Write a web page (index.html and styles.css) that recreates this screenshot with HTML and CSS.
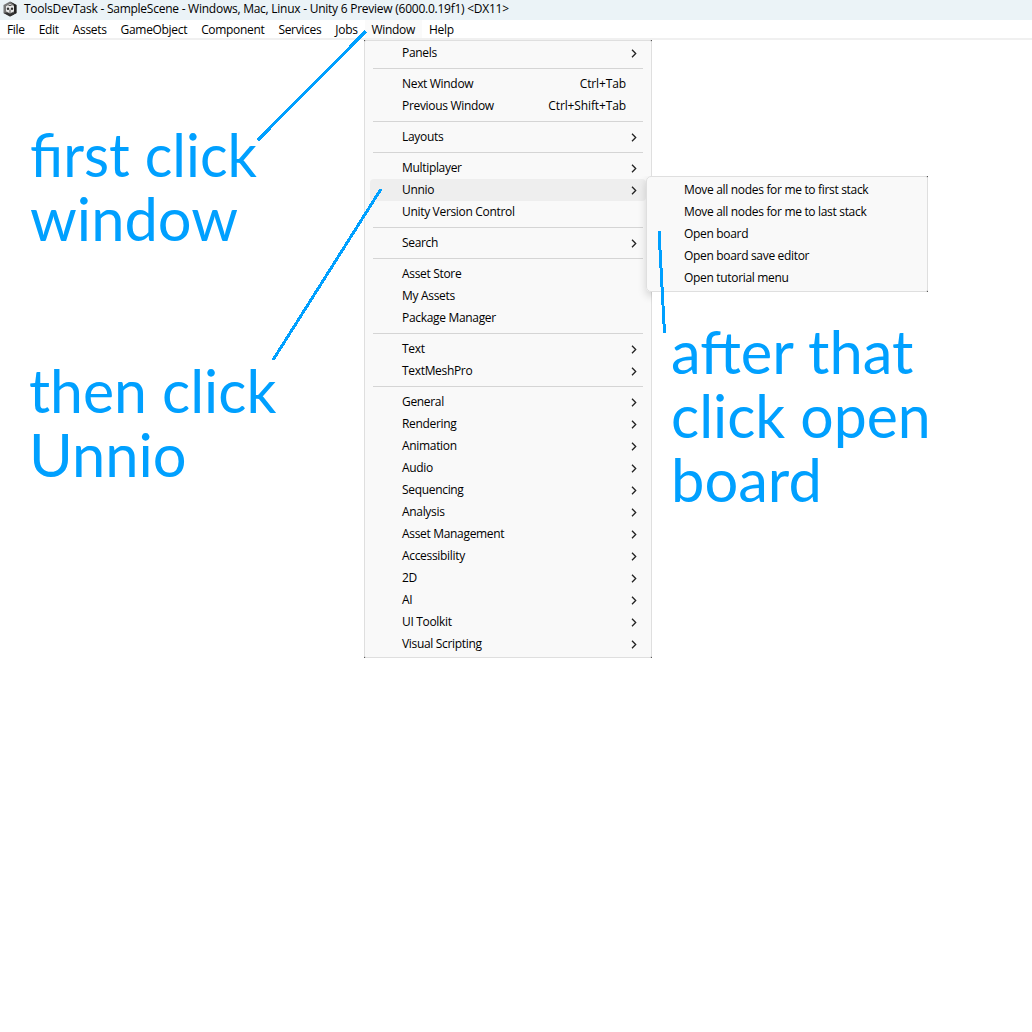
FILE: index.html
```html
<!DOCTYPE html>
<html lang="en">
<head>
<meta charset="utf-8">
<title>ToolsDevTask - SampleScene</title>
<link rel="stylesheet" href="styles.css">
</head>
<body>
<svg class="defs" width="0" height="0"><symbol id="chev" viewBox="0 0 6 9"><path d="M1 .8 4.7 4.5 1 8.2" fill="none" stroke="#222" stroke-width="1.3"/></symbol></svg>
<header class="titlebar">
<svg class="logo" width="14" height="16" viewBox="0 0 14 16"><path d="M7 .5 13.5 4v8L7 15.5 .5 12V4z" fill="#777"/><path d="M7 .5 13.5 4v8L7 15.5 11 12V4z" fill="#222"/><path d="M.5 12 7 15.500 13.500 12 7 11z" fill="#333"/><path d="M7 3 11 5.200v5L7 12.500 3 10.200v-5z" fill="#e8e8e8"/><circle cx="5" cy="7.800" r="1.200" fill="#333"/><circle cx="9" cy="7.800" r="1.200" fill="#333"/><path d="M7 8.500V12M5.500 4.500h3" stroke="#555" stroke-width="1"/></svg>
<span class="title">ToolsDevTask - SampleScene - Windows, Mac, Linux - Unity 6 Preview (6000.0.19f1) &lt;DX11&gt;</span>
</header>
<nav class="menubar">
<span>File</span><span>Edit</span><span>Assets</span><span>GameObject</span><span>Component</span><span>Services</span><span>Jobs</span><span class="open">Window</span><span>Help</span>
</nav>
<div class="menu-frame main"><div class="menu">
<div class="row"><span>Panels</span><svg><use href="#chev"/></svg></div>
<hr>
<div class="row"><span>Next Window</span><kbd>Ctrl+Tab</kbd></div>
<div class="row"><span>Previous Window</span><kbd>Ctrl+Shift+Tab</kbd></div>
<hr>
<div class="row"><span>Layouts</span><svg><use href="#chev"/></svg></div>
<hr>
<div class="row"><span>Multiplayer</span><svg><use href="#chev"/></svg></div>
<div class="row active"><span>Unnio</span><svg><use href="#chev"/></svg></div>
<div class="row"><span>Unity Version Control</span></div>
<hr>
<div class="row"><span>Search</span><svg><use href="#chev"/></svg></div>
<hr>
<div class="row"><span>Asset Store</span></div>
<div class="row"><span>My Assets</span></div>
<div class="row"><span>Package Manager</span></div>
<hr>
<div class="row"><span>Text</span><svg><use href="#chev"/></svg></div>
<div class="row"><span>TextMeshPro</span><svg><use href="#chev"/></svg></div>
<hr>
<div class="row"><span>General</span><svg><use href="#chev"/></svg></div>
<div class="row"><span>Rendering</span><svg><use href="#chev"/></svg></div>
<div class="row"><span>Animation</span><svg><use href="#chev"/></svg></div>
<div class="row"><span>Audio</span><svg><use href="#chev"/></svg></div>
<div class="row"><span>Sequencing</span><svg><use href="#chev"/></svg></div>
<div class="row"><span>Analysis</span><svg><use href="#chev"/></svg></div>
<div class="row"><span>Asset Management</span><svg><use href="#chev"/></svg></div>
<div class="row"><span>Accessibility</span><svg><use href="#chev"/></svg></div>
<div class="row"><span>2D</span><svg><use href="#chev"/></svg></div>
<div class="row"><span>AI</span><svg><use href="#chev"/></svg></div>
<div class="row"><span>UI Toolkit</span><svg><use href="#chev"/></svg></div>
<div class="row"><span>Visual Scripting</span><svg><use href="#chev"/></svg></div>
</div></div>
<div class="menu-shadow"></div>
<div class="menu-frame sub"><div class="menu">
<div class="row"><span>Move all nodes for me to first stack</span></div>
<div class="row"><span>Move all nodes for me to last stack</span></div>
<div class="row"><span>Open board</span></div>
<div class="row"><span>Open board save editor</span></div>
<div class="row"><span>Open tutorial menu</span></div>
</div></div>
<p class="note one"><span class="narrow">first click</span><span class="wide">window</span></p>
<p class="note two"><span>then click</span><span class="wide">Unnio</span></p>
<p class="note three"><span class="wide">after that</span><span>click open</span><span class="wide">board</span></p>
<svg class="lines" width="1032" height="1032"><path d="M258 140 366 31M273 360 381 189M659 231 664.500 333"/></svg>
</body>
</html>
```
FILE: styles.css
```css
body { margin: 0; height: 1032px; position: relative; overflow: hidden; background: #fff; color: #000; font: 12px/22px "Open Sans", sans-serif; letter-spacing: -0.32px; }
.defs { position: absolute; }
.titlebar { height: 20px; background: #ebf3f7; display: flex; align-items: center; }
.logo { margin: 0 7px 3px 3px; }
.title { line-height: 18px; margin-bottom: 2px; white-space: nowrap; letter-spacing: -0.25px; }
.menubar { display: flex; height: 18px; line-height: 19px; border-bottom: 2px solid #f0f0f0; }
.menubar span { padding: 0 7px; }
.menubar .open { background: #fafafa; }
.menu-frame { position: absolute; background: #444; }
.menu { box-sizing: border-box; height: 100%; background: #f9f9f9; border: 1px solid #dfdfdf; border-radius: 2px; }
.main { left: 364px; top: 40px; width: 288px; height: 618px; }
.main .menu { padding-top: 1px; }
.sub { left: 646px; top: 176px; width: 282px; height: 116px; background: linear-gradient(to right, transparent 50%, #444 50%); }
.sub .menu { padding-top: 2px; border-radius: 5px 2px 2px 5px; }
/* the submenu's shadow falls only on the parent menu */
.menu-shadow { position: absolute; left: 632px; top: 176px; width: 20px; height: 136px; overflow: hidden; }
.menu-shadow::before { content: ""; position: absolute; left: 14px; top: 0; width: 282px; height: 116px; border-radius: 5px; box-shadow: 0 4px 9px rgba(0,0,0,.16); }
.row { height: 22px; margin: 0 5px; padding: 0 9px 0 32px; display: flex; justify-content: space-between; align-items: center; white-space: nowrap; }
.row.active { background: #eee; border-radius: 4px; }
.row svg { width: 6px; height: 9px; margin-top: 1px; }
kbd { font: inherit; margin-right: 11px; letter-spacing: -0.12px; }
hr { height: 1px; margin: 4px 8px; border: 0; background: #d5d5d5; }
.note { position: absolute; margin: 0; font: 60px/64px Lato, sans-serif; letter-spacing: 0; color: #00a0ff; white-space: nowrap; }
.note span { display: block; transform-origin: 0 0; transform: scaleX(.982); }
.note .narrow { transform: scaleX(.965); }
.note .wide { transform: scaleX(.994); }
.one { left: 30px; top: 122px; }
.two { left: 29px; top: 358px; }
.three { left: 671px; top: 319px; }
.lines { position: absolute; left: 0; top: 0; fill: none; stroke: #00a0ff; stroke-width: 3; shape-rendering: crispEdges; }
```
